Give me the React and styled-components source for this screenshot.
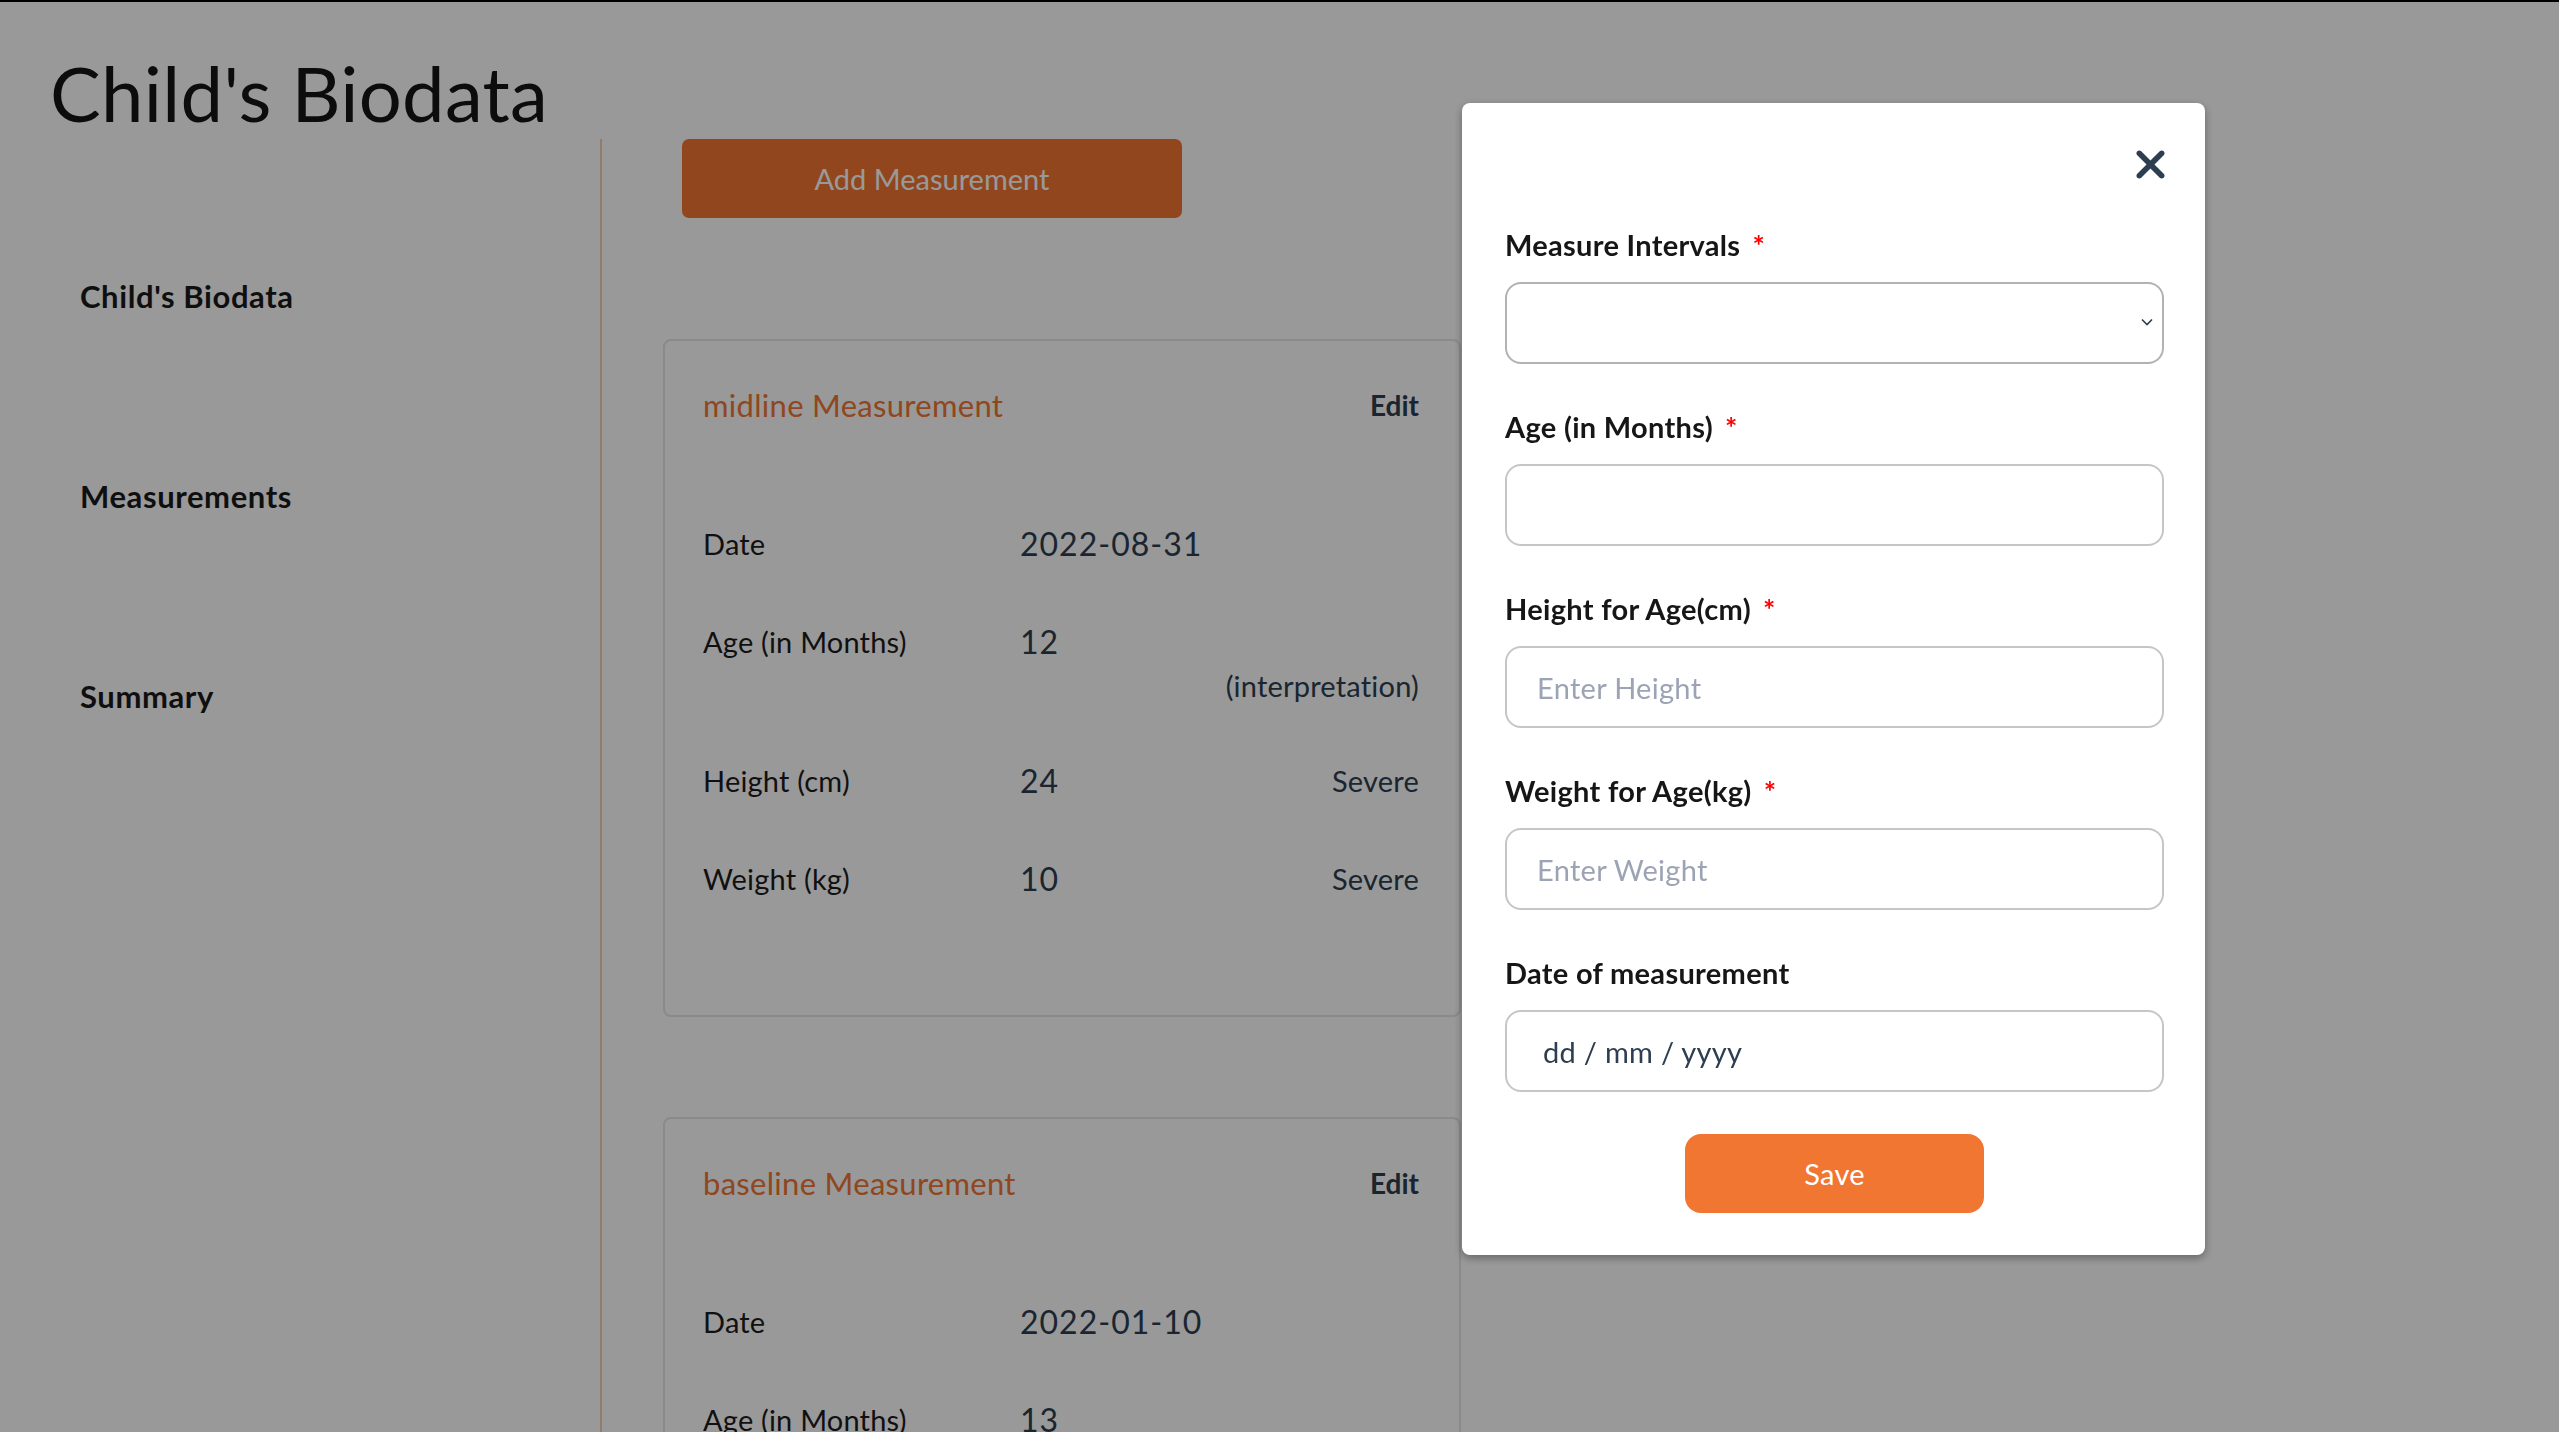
import React from 'react';
import styled, { createGlobalStyle } from 'styled-components';
import { FaXmark } from 'react-icons/fa6';

const GlobalStyle = createGlobalStyle`
  html, body {
    margin: 0;
    padding: 0;
    background: #fff;
    font-family: Lato, "Noto Sans", sans-serif;
    color: #1c1c1c;
    overflow: hidden;
  }
  * {
    box-sizing: border-box;
  }
`;

const Page = styled.div`
  border-top: 2px solid #000;
  min-height: 100vh;
`;

const PageTitle = styled.h1`
  margin: 0;
  padding: 47px 0 0 50px;
  font-size: 76px;
  line-height: 88px;
  font-weight: 400;
  letter-spacing: 0.3px;
  color: #151515;
`;

const Body = styled.div`
  display: flex;
  margin-top: 2px;
`;

const Sidebar = styled.nav`
  width: 602px;
  flex-shrink: 0;
  min-height: 1400px;
  border-right: 2px solid #f3cfb6;
  padding: 137px 0 0 80px;
  display: flex;
  flex-direction: column;
  gap: 160px;
`;

const NavItem = styled.div`
  font-size: 31px;
  line-height: 40px;
  font-weight: 700;
  letter-spacing: 0.6px;
  color: #1a1a1a;
`;

const Main = styled.main`
  padding-left: 61px;
  display: flex;
  flex-direction: column;
`;

const AddButton = styled.button`
  margin-left: 19px;
  width: 500px;
  height: 79px;
  border: none;
  border-radius: 7px;
  background: #f27632;
  color: #fff;
  font-family: inherit;
  font-size: 29px;
  cursor: pointer;
`;

const CardList = styled.div`
  margin-top: 121px;
  display: flex;
  flex-direction: column;
  gap: 100px;
`;

const Card = styled.section`
  width: 798px;
  border: 2px solid #e6e6e6;
  border-radius: 8px;
  padding: 44px 40px 117px 38px;
`;

const CardHeader = styled.div`
  display: flex;
  justify-content: space-between;
  align-items: center;
  height: 40px;
  margin-bottom: 98px;
`;

const CardTitle = styled.div`
  font-size: 31px;
  letter-spacing: 0.3px;
  color: #f07632;
`;

const EditLink = styled.div`
  font-size: 28px;
  font-weight: 700;
  color: #2d3e50;
  cursor: pointer;
`;

const Row = styled.div`
  display: grid;
  grid-template-columns: 317px 1fr auto;
  align-items: center;
  height: 40px;
  margin-top: ${props => props.$space}px;
`;

const Label = styled.div`
  font-size: 29px;
  letter-spacing: 0.2px;
  color: #1c1c1c;
`;

const Value = styled.div`
  font-size: 32px;
  letter-spacing: 1px;
  color: #2d3e50;
`;

const Interp = styled.div`
  font-size: 29px;
  letter-spacing: 0.2px;
  color: #2d3e50;
  text-align: right;
  grid-column: 3;
`;

const Overlay = styled.div`
  position: fixed;
  inset: 0;
  background: rgba(0, 0, 0, 0.4);
  padding: 103px 0 0 1462px;
`;

const Modal = styled.div`
  width: 743px;
  background: #fff;
  border-radius: 8px;
  box-shadow: 0 3px 8px rgba(0, 0, 0, 0.35);
  padding: 39px 41px 42px 43px;
  display: flex;
  flex-direction: column;
`;

const CloseRow = styled.div`
  display: flex;
  justify-content: flex-end;
  height: 45px;
  margin-bottom: 41px;
  margin-right: -9px;
  color: #2d3e50;
  font-size: 45px;
  line-height: 0;
`;

const Field = styled.div`
  margin-bottom: ${props => (props.$last ? 42 : 46)}px;
`;

const FieldLabel = styled.label`
  display: block;
  font-size: 29px;
  line-height: 34px;
  font-weight: 700;
  letter-spacing: 0.3px;
  color: #161616;
  margin-bottom: 20px;
`;

const Required = styled.span`
  color: #ff0000;
  margin-left: 12px;
`;

const SelectWrap = styled.div`
  position: relative;
`;

const Select = styled.select`
  width: 100%;
  height: 82px;
  border: 2px solid #b5b1b3;
  border-radius: 16px;
  background: #fff;
  appearance: none;
  font-family: inherit;
  font-size: 28px;
  padding: 0 30px;
`;

const Chevron = styled.svg`
  position: absolute;
  right: 10px;
  top: 35px;
  width: 14px;
  height: 10px;
  pointer-events: none;
`;

const Input = styled.input`
  width: 100%;
  height: 82px;
  border: 2px solid #c9c5c7;
  border-radius: 16px;
  background: #fff;
  font-family: inherit;
  font-size: 29px;
  letter-spacing: 0.3px;
  padding: 0 ${props => (props.$date ? 36 : 30)}px;
  color: #2d3e50;
  outline: none;

  &::placeholder {
    color: ${props => (props.$date ? '#2d3e50' : '#9ca3b4')};
  }
`;

const SaveButton = styled.button`
  align-self: center;
  width: 299px;
  height: 79px;
  border: none;
  border-radius: 16px;
  background: #f07632;
  color: #fff;
  font-family: inherit;
  font-size: 29px;
  letter-spacing: 0.3px;
  cursor: pointer;
`;

const measurements = [
  {
    title: 'midline Measurement',
    date: '2022-08-31',
    age: 12,
    height: 24,
    weight: 10,
    heightInterp: 'Severe',
    weightInterp: 'Severe',
  },
  {
    title: 'baseline Measurement',
    date: '2022-01-10',
    age: 13,
    height: 30,
    weight: 11,
    heightInterp: 'Severe',
    weightInterp: 'Severe',
  },
];

const MeasurementCard = ({ m }) => (
  <Card>
    <CardHeader>
      <CardTitle>{m.title}</CardTitle>
      <EditLink>Edit</EditLink>
    </CardHeader>
    <Row $space={0}>
      <Label>Date</Label>
      <Value>{m.date}</Value>
    </Row>
    <Row $space={58}>
      <Label>Age (in Months)</Label>
      <Value>{m.age}</Value>
    </Row>
    <Row $space={4}>
      <Interp>(interpretation)</Interp>
    </Row>
    <Row $space={55}>
      <Label>Height (cm)</Label>
      <Value>{m.height}</Value>
      <Interp>{m.heightInterp}</Interp>
    </Row>
    <Row $space={58}>
      <Label>Weight (kg)</Label>
      <Value>{m.weight}</Value>
      <Interp>{m.weightInterp}</Interp>
    </Row>
  </Card>
);

const App = () => (
  <>
    <GlobalStyle />
    <Page>
      <PageTitle>Child's Biodata</PageTitle>
      <Body>
        <Sidebar>
          <NavItem>Child's Biodata</NavItem>
          <NavItem>Measurements</NavItem>
          <NavItem>Summary</NavItem>
        </Sidebar>
        <Main>
          <AddButton>Add Measurement</AddButton>
          <CardList>
            {measurements.map(m => (
              <MeasurementCard key={m.title} m={m} />
            ))}
          </CardList>
        </Main>
      </Body>
    </Page>
    <Overlay>
      <Modal>
        <CloseRow>
          <FaXmark />
        </CloseRow>
        <Field>
          <FieldLabel>
            Measure Intervals<Required>*</Required>
          </FieldLabel>
          <SelectWrap>
            <Select defaultValue="">
              <option value="" />
              <option value="baseline">Baseline</option>
              <option value="midline">Midline</option>
              <option value="endline">Endline</option>
            </Select>
            <Chevron viewBox="0 0 14 10">
              <path d="M2 2.5 L7 7.5 L12 2.5" fill="none" stroke="#2d3e50" strokeWidth="1.6" />
            </Chevron>
          </SelectWrap>
        </Field>
        <Field>
          <FieldLabel>
            Age (in Months)<Required>*</Required>
          </FieldLabel>
          <Input type="text" />
        </Field>
        <Field>
          <FieldLabel>
            Height for Age(cm)<Required>*</Required>
          </FieldLabel>
          <Input type="text" placeholder="Enter Height" />
        </Field>
        <Field>
          <FieldLabel>
            Weight for Age(kg)<Required>*</Required>
          </FieldLabel>
          <Input type="text" placeholder="Enter Weight" />
        </Field>
        <Field $last>
          <FieldLabel>Date of measurement</FieldLabel>
          <Input type="text" $date placeholder="dd / mm / yyyy" />
        </Field>
        <SaveButton>Save</SaveButton>
      </Modal>
    </Overlay>
  </>
);

export default App;
